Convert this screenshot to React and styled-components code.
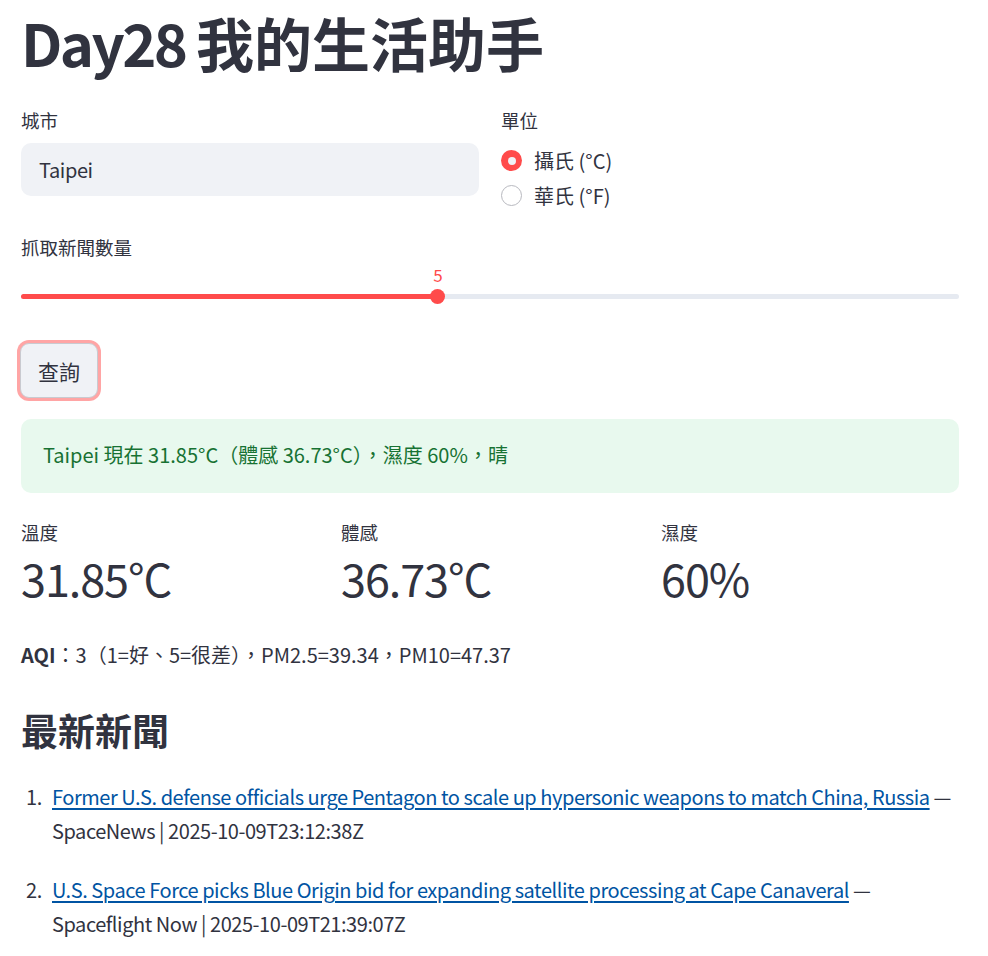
import React from "react";
import styled, { createGlobalStyle } from "styled-components";

const Global = createGlobalStyle`
  html, body { margin: 0; padding: 0; background: #ffffff; }
  body {
    font-family: "Noto Sans CJK TC", "Noto Sans CJK JP", sans-serif;
    color: #31333f;
    font-size: 20px;
    -webkit-font-smoothing: antialiased;
  }
  * { box-sizing: border-box; }
`;

const Page = styled.main`
  width: 988px;
  padding: 9px 29px 40px 21px;
`;

const Title = styled.h1`
  margin: 0;
  font-size: 58px;
  line-height: 66px;
  font-weight: 700;
  color: #31333f;
`;

const TightLatin = styled.span`
  letter-spacing: ${(p) => p.$ls || 0}px;
`;

const TwoCols = styled.div`
  display: grid;
  grid-template-columns: 458px 458px;
  column-gap: 22px;
  margin-top: 31px;
`;

const Field = styled.div`
  display: flex;
  flex-direction: column;
`;

const Label = styled.label`
  font-size: 18.5px;
  line-height: 28px;
  color: #31333f;
  margin-bottom: 9px;
`;

const TextInput = styled.div`
  height: 53px;
  border-radius: 10px;
  background: #f0f2f6;
  padding: 0 18px;
  display: flex;
  align-items: center;
  font-size: 20px;
  letter-spacing: -0.4px;
  color: #31333f;
`;

const RadioGroup = styled.div`
  display: flex;
  flex-direction: column;
`;

const RadioRow = styled.div`
  height: 35px;
  display: flex;
  align-items: center;
  gap: 12px;
  font-size: 20px;
`;

const RadioDot = styled.span`
  width: 21px;
  height: 21px;
  border-radius: 50%;
  flex: none;
  background: ${(p) => (p.$on ? "#ff4b4b" : "#ffffff")};
  border: ${(p) => (p.$on ? "none" : "1.5px solid #b8b9bf")};
  display: flex;
  align-items: center;
  justify-content: center;
  &::after {
    content: "";
    display: ${(p) => (p.$on ? "block" : "none")};
    width: 8px;
    height: 8px;
    border-radius: 50%;
    background: #f0f2f6;
  }
`;

const SliderBlock = styled.div`
  margin-top: 20px;
  display: flex;
  flex-direction: column;
`;

const SliderLabel = styled(Label)`
  margin-bottom: 0;
`;

const Track = styled.div`
  position: relative;
  margin-top: 33px;
  height: 5px;
  border-radius: 3px;
  background: #e6eaf1;
`;

const Fill = styled.div`
  height: 100%;
  border-radius: 3px;
  background: #ff4b4b;
`;

const Thumb = styled.div`
  position: absolute;
  top: 50%;
  width: 15px;
  height: 15px;
  margin-left: -7.5px;
  margin-top: -7.5px;
  border-radius: 50%;
  background: #ff4b4b;
`;

const ThumbValue = styled.div`
  position: absolute;
  bottom: 14px;
  transform: translateX(-50%);
  font-size: 17px;
  line-height: 20px;
  color: #ff4b4b;
`;

const Button = styled.button`
  margin-top: 44px;
  align-self: flex-start;
  height: 55px;
  padding: 0 17px;
  border-radius: 9px;
  border: 1px solid #c9cad0;
  background: #f0f2f6;
  box-shadow: 0 0 0 3px rgba(255, 75, 75, 0.5);
  font-family: inherit;
  font-size: 21px;
  color: #31333f;
  margin-left: -1px;
`;

const Alert = styled.div`
  margin-top: 21px;
  height: 74px;
  border-radius: 10px;
  background: #e8f9ee;
  color: #177233;
  padding: 0 22px 3px;
  display: flex;
  align-items: center;
  font-size: 20px;
`;

const Metrics = styled.div`
  display: grid;
  grid-template-columns: repeat(3, 298px);
  column-gap: 22px;
  margin-top: 25px;
`;

const Metric = styled.div`
  display: flex;
  flex-direction: column;
`;

const MetricLabel = styled.div`
  font-size: 18.5px;
  line-height: 28px;
`;

const MetricValue = styled.div`
  margin-top: 5px;
  font-size: 45px;
  line-height: 54px;
  font-weight: 400;
  letter-spacing: -1.1px;
`;

const Para = styled.p`
  margin: 34px 0 0;
  font-size: 20px;
  line-height: 32px;
`;

const Subhead = styled.h3`
  margin: 38px 0 0;
  font-size: 37px;
  line-height: 42px;
  font-weight: 700;
`;

const NewsList = styled.ol`
  margin: 29px 0 0;
  padding: 0;
  list-style: none;
`;

const NewsItem = styled.li`
  display: grid;
  grid-template-columns: 31px 1fr;
  font-size: 20px;
  line-height: 34px;
  letter-spacing: -0.45px;
  & + & { margin-top: 25px; }
`;

const ItemNum = styled.span`
  padding-left: 5px;
`;

const NewsLink = styled.a`
  color: #0054a3;
  text-decoration: underline;
  text-underline-offset: 3px;
`;

const news = [
  {
    title: "Former U.S. defense officials urge Pentagon to scale up hypersonic weapons to match China, Russia",
    source: "SpaceNews",
    time: "2025-10-09T23:12:38Z",
  },
  {
    title: "U.S. Space Force picks Blue Origin bid for expanding satellite processing at Cape Canaveral",
    source: "Spaceflight Now",
    time: "2025-10-09T21:39:07Z",
  },
];

export default function App() {
  const min = 1;
  const max = 10;
  const value = 5;
  const pct = ((value - min) / (max - min)) * 100;
  return (
    <>
      <Global />
      <Page>
        <Title>
          <TightLatin $ls={-2.6}>Day28 </TightLatin>我的生活助手
        </Title>
        <TwoCols>
          <Field>
            <Label>城市</Label>
            <TextInput>Taipei</TextInput>
          </Field>
          <Field>
            <Label>單位</Label>
            <RadioGroup>
              <RadioRow>
                <RadioDot $on />
                攝氏 (°C)
              </RadioRow>
              <RadioRow>
                <RadioDot />
                華氏 (°F)
              </RadioRow>
            </RadioGroup>
          </Field>
        </TwoCols>
        <SliderBlock>
          <SliderLabel>抓取新聞數量</SliderLabel>
          <Track>
            <Fill style={{ width: `${pct}%` }} />
            <Thumb style={{ left: `${pct}%` }} />
            <ThumbValue style={{ left: `${pct}%` }}>{value}</ThumbValue>
          </Track>
          <Button>查詢</Button>
        </SliderBlock>
        <Alert>Taipei 現在 31.85°C（體感 36.73°C），濕度 60%，晴</Alert>
        <Metrics>
          <Metric>
            <MetricLabel>溫度</MetricLabel>
            <MetricValue>31.85°C</MetricValue>
          </Metric>
          <Metric>
            <MetricLabel>體感</MetricLabel>
            <MetricValue>36.73°C</MetricValue>
          </Metric>
          <Metric>
            <MetricLabel>濕度</MetricLabel>
            <MetricValue>60%</MetricValue>
          </Metric>
        </Metrics>
        <Para>
          <strong>AQI</strong>：3（1=好、5=很差），PM2.5=39.34，PM10=47.37
        </Para>
        <Subhead>最新新聞</Subhead>
        <NewsList>
          {news.map((n, i) => (
            <NewsItem key={n.title}>
              <ItemNum>{i + 1}.</ItemNum>
              <span>
                <NewsLink href="#">{n.title}</NewsLink> — {n.source} | {n.time}
              </span>
            </NewsItem>
          ))}
        </NewsList>
      </Page>
    </>
  );
}
